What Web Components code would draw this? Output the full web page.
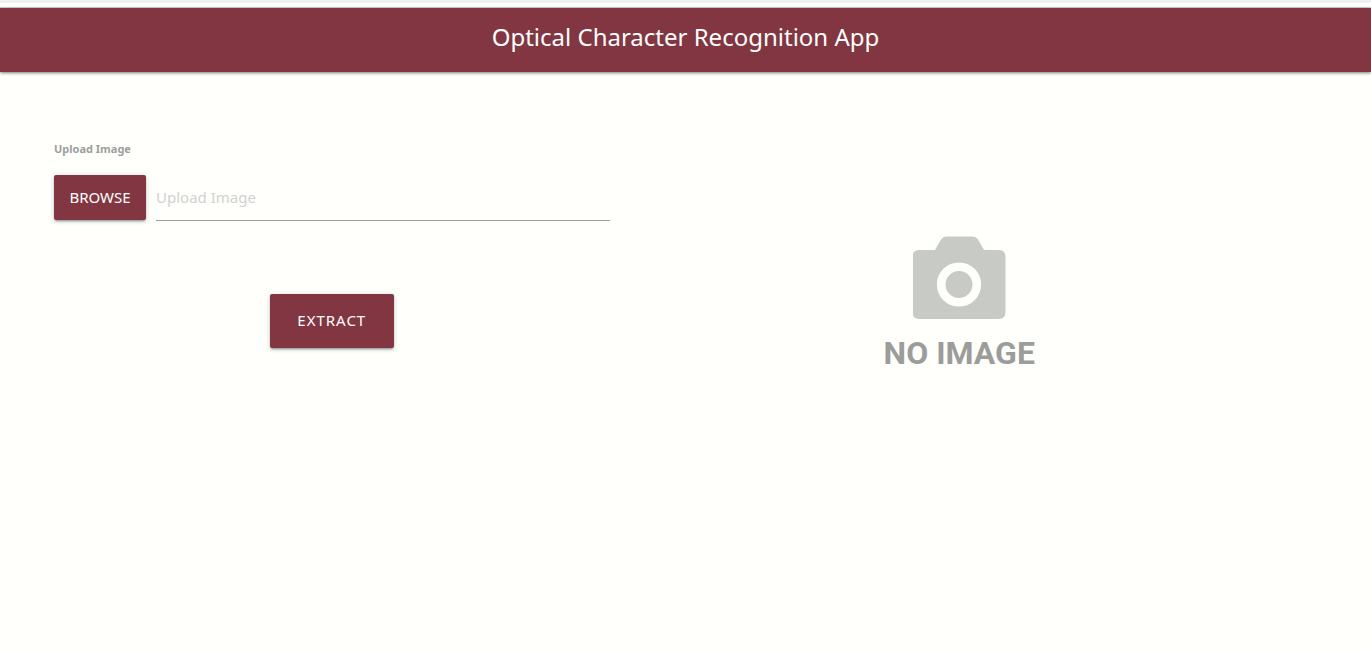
<!DOCTYPE html>
<html lang="en">
<head>
<meta charset="utf-8">
<meta name="viewport" content="width=device-width, initial-scale=1">
<title>Optical Character Recognition App</title>
<style>
  html { background: #fffffc; }
  body { margin: 0; font-family: "Noto Sans", "Open Sans", sans-serif; color: #333; }
</style>
</head>
<body>
<ocr-app></ocr-app>

<script>
class OcrElement extends HTMLElement {
  constructor() {
    super();
    this.attachShadow({ mode: 'open' }).innerHTML = this.constructor.template;
  }
}

customElements.define('app-header', class extends OcrElement {
  static template = `
    <style>
      :host { display: block; border-top: 3px solid #f0f0ef; background: #fff; padding-top: 5px; }
      header {
        display: flex; justify-content: center;
        height: 64px; box-sizing: border-box; padding-top: 11px;
        background: #823641; color: #fff;
        box-shadow: 0 1px 3px rgba(20, 40, 20, .6), 0 -1px 0 #d4d6d0;
      }
      h1 { margin: 0; font-size: 24px; line-height: 36px; font-weight: 400; white-space: nowrap; }
    </style>
    <header><h1><slot></slot></h1></header>`;
});

customElements.define('raised-button', class extends OcrElement {
  static template = `
    <style>
      :host { display: inline-block; }
      button {
        display: block; width: 100%; height: 45px; padding: 0 0 2px;
        border: 0; border-radius: 2px; cursor: pointer;
        font: inherit; font-size: 15px; line-height: 20px; color: #fff;
        background: #823641;
        box-shadow: 0 2px 2px rgba(0, 0, 0, .14), 0 3px 1px -2px rgba(0, 0, 0, .12), 0 1px 5px rgba(0, 0, 0, .2);
      }
      :host([large]) button { height: 54px; letter-spacing: 1px; }
    </style>
    <button type="button"><slot></slot></button>`;
});

customElements.define('file-field', class extends OcrElement {
  static template = `
    <style>
      :host { display: block; }
      label { display: block; font-size: 11px; line-height: 18px; font-weight: 700; color: #9e9e9e; }
      .row { display: flex; gap: 10px; margin-top: 17px; }
      raised-button { flex: none; width: 92px; }
      #path {
        flex: 1; min-width: 0; height: 46px; box-sizing: border-box; padding: 0 0 2px;
        border: 0; border-bottom: 1px solid #9e9e9e; border-radius: 0; outline: 0;
        background: transparent; font: inherit; font-size: 15px; color: inherit;
      }
      #path::placeholder { color: #d1d1d1; opacity: 1; }
    </style>
    <label for="path">Upload Image</label>
    <div class="row">
      <raised-button>BROWSE</raised-button>
      <input id="path" type="text" placeholder="Upload Image">
      <input id="file" type="file" accept="image/*" hidden>
    </div>`;
  connectedCallback() {
    const file = this.shadowRoot.getElementById('file');
    this.shadowRoot.querySelector('raised-button').addEventListener('click', () => file.click());
    file.addEventListener('change', () => {
      this.shadowRoot.getElementById('path').value = file.files[0] ? file.files[0].name : '';
    });
  }
});

customElements.define('image-preview', class extends OcrElement {
  static template = `
    <style>
      :host { display: flex; flex-direction: column; align-items: center; }
      svg { display: block; width: 93px; height: 83px; }
      p {
        margin: 15px 0 0; font-family: Roboto, "Liberation Sans", sans-serif;
        font-size: 32px; line-height: 38px; font-weight: 700; color: #9c9d9b;
        white-space: nowrap;
      }
    </style>
    <svg viewBox="0 0 93 83" aria-hidden="true">
      <path fill="#c8cac6" d="M7 14H22L28 3.500Q30 0.500 34 0.500H59Q63 0.500 65 3.500L71 14H86Q92.500 14 92.500 21V76Q92.500 83 86 83H6.500Q-0.500 83 -0.500 76V21Q-0.500 14 6.500 14Z"/>
      <circle cx="46" cy="48.500" r="17.800" fill="none" stroke="#fffffc" stroke-width="8.600"/>
    </svg>
    <p><slot></slot></p>`;
});

customElements.define('ocr-app', class extends OcrElement {
  static template = `
    <style>
      :host { display: block; }
      main {
        display: grid; grid-template-columns: 1fr 1fr;
        padding: 68px 98px 48px 18px;
      }
      form { display: flex; flex-direction: column; margin: 0; padding: 0 36px; }
      .action { display: flex; justify-content: center; margin-top: 73px; }
      .action raised-button { width: 124px; }
      image-preview { padding-top: 96px; }
    </style>
    <app-header>Optical Character Recognition App</app-header>
    <main>
      <form>
        <file-field></file-field>
        <div class="action"><raised-button large>EXTRACT</raised-button></div>
      </form>
      <image-preview>NO IMAGE</image-preview>
    </main>`;
});
</script>
</body>
</html>
